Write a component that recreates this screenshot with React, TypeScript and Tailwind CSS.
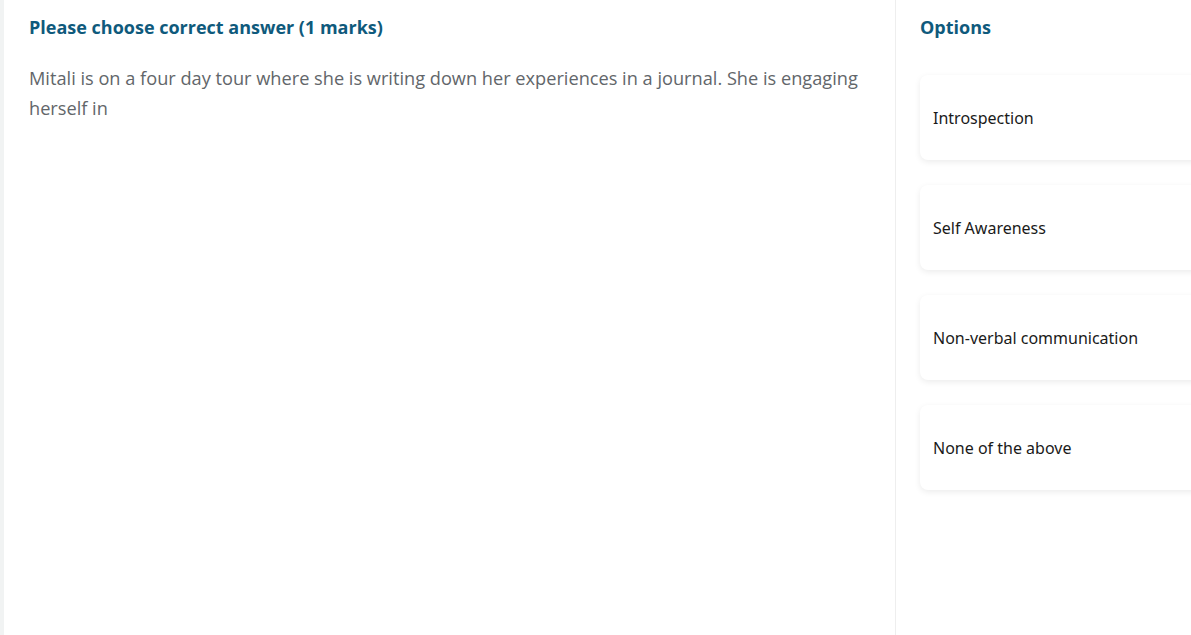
const options = [
  "Introspection",
  "Self Awareness",
  "Non-verbal communication",
  "None of the above",
];

export default function App() {
  return (
    <div className="h-[635px] w-[1191px] flex bg-white overflow-hidden font-['Open_Sans',sans-serif]">
      <div className="w-[4px] bg-[#f1f3f3]" />
      <div className="flex-1 pl-[25px] pr-6 pt-[16px]">
        <h2 className="text-[18px] font-bold text-[#0f5a7c] leading-[22px]">
          Please choose correct answer (1 marks)
        </h2>
        <p className="mt-[25px] text-[18.2px] leading-[30px] text-[#62666a]">
          Mitali is on a four day tour where she is writing down her experiences in a journal. She is engaging
          herself in
        </p>
      </div>
      <div className="w-[296px] shrink-0 border-l border-[#eeeeee] pl-[24px] pt-[16px]">
        <h3 className="text-[18px] font-bold text-[#0f5a7c] leading-[22px]">Options</h3>
        <div className="mt-[37px] flex flex-col gap-[25px]">
          {options.map((o) => (
            <div
              key={o}
              className="h-[85px] w-[300px] rounded-[8px] bg-white shadow-[0_2px_6px_rgba(0,0,0,0.08)] flex items-center pl-[13px] font-['Noto_Sans',sans-serif] text-[16px] text-[#1a1a1a]"
            >
              {o}
            </div>
          ))}
        </div>
      </div>
    </div>
  );
}
